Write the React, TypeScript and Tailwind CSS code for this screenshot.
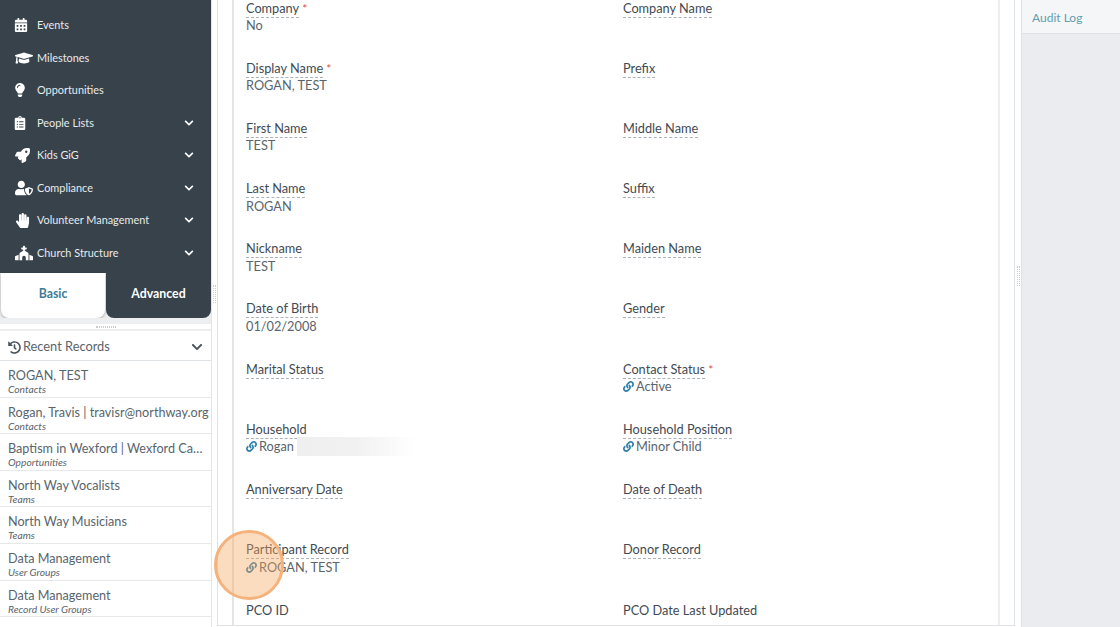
import type { ReactNode } from "react";
import {
  FaCalendarAlt,
  FaChevronDown,
  FaChurch,
  FaClipboardList,
  FaGraduationCap,
  FaHandPaper,
  FaHistory,
  FaLightbulb,
  FaLink,
  FaRocket,
  FaUserShield,
} from "react-icons/fa";

const navItems = [
  { label: "Events", icon: <FaCalendarAlt size={14} className="-ml-[1px]" /> },
  { label: "Milestones", icon: <FaGraduationCap size={18} /> },
  { label: "Opportunities", icon: <FaLightbulb size={14} className="-ml-[2px]" /> },
  { label: "People Lists", icon: <FaClipboardList size={14} className="-ml-[2px]" />, more: true },
  { label: "Kids GiG", icon: <FaRocket size={15} />, more: true },
  { label: "Compliance", icon: <FaUserShield size={18} />, more: true },
  { label: "Volunteer Management", icon: <FaHandPaper size={15} />, more: true },
  { label: "Church Structure", icon: <FaChurch size={18} />, more: true },
];

const recents = [
  ["ROGAN, TEST", "Contacts"],
  ["Rogan, Travis | travisr@northway.org", "Contacts"],
  ["Baptism in Wexford | Wexford Campus", "Opportunities"],
  ["North Way Vocalists", "Teams"],
  ["North Way Musicians", "Teams"],
  ["Data Management", "User Groups"],
  ["Data Management", "Record User Groups"],
];

type FieldProps = {
  label: string;
  value?: ReactNode;
  required?: boolean;
  linked?: boolean;
  plain?: boolean;
};

const fields: FieldProps[] = [
  { label: "Company", value: "No", required: true },
  { label: "Company Name" },
  { label: "Display Name", value: "ROGAN, TEST", required: true },
  { label: "Prefix" },
  { label: "First Name", value: "TEST" },
  { label: "Middle Name" },
  { label: "Last Name", value: "ROGAN" },
  { label: "Suffix" },
  { label: "Nickname", value: "TEST" },
  { label: "Maiden Name" },
  { label: "Date of Birth", value: "01/02/2008" },
  { label: "Gender" },
  { label: "Marital Status" },
  { label: "Contact Status", value: "Active", required: true, linked: true },
  {
    label: "Household",
    linked: true,
    value: (
      <span className="flex items-center">
        Rogan
        <span className="ml-[3px] h-[19px] w-[118px] bg-gradient-to-r from-[#efefef] via-[#f1f1f1] to-white" />
      </span>
    ),
  },
  { label: "Household Position", value: "Minor Child", linked: true },
  { label: "Anniversary Date" },
  { label: "Date of Death" },
  { label: "Participant Record", value: "ROGAN, TEST", linked: true },
  { label: "Donor Record" },
  { label: "PCO ID", plain: true },
  { label: "PCO Date Last Updated", plain: true },
];

function Field({ label, value, required, linked, plain }: FieldProps) {
  return (
    <div className="h-[60.2px]">
      <div className="flex h-[17px] items-center text-[12.75px] leading-[17px] text-[#3f4a52]">
        <span className={plain ? "" : "border-b border-dashed border-[#aab2b8]"}>{label}</span>
        {required && <span className="ml-[3px] self-start text-[12px] text-[#d9534f]">*</span>}
      </div>
      {value && (
        <div className="flex h-[17px] items-center text-[12.75px] text-[#59646c]">
          {linked && <FaLink size={11} className="mr-[2px] text-[#2f7ea8]" />}
          {value}
        </div>
      )}
    </div>
  );
}

function Sidebar() {
  return (
    <aside className="flex w-[212px] shrink-0 flex-col border-r border-[#e3e5e8]">
      <nav className="h-[273px] bg-[#37424b] pt-[9px] text-[#e8eaec]">
        {navItems.map((item) => (
          <div key={item.label} className="flex h-[32.5px] items-center text-[10.9px]">
            <span className="flex w-[37px] shrink-0 justify-start pl-[15px] text-white">{item.icon}</span>
            <span className="flex-1">{item.label}</span>
            {item.more && <FaChevronDown size={10} className="mr-[17px] text-white" />}
          </div>
        ))}
      </nav>
      <div className="flex h-[45px] bg-[#eceef0] text-[12.3px] font-bold">
        <div className="ml-px flex w-[104px] items-center justify-center rounded-b-lg bg-white pb-[3px] text-[#3f7c96] shadow-[0_1px_3px_rgba(0,0,0,0.3)]">
          Basic
        </div>
        <div className="ml-px flex flex-1 items-center justify-center rounded-b-lg bg-[#37424b] pb-[3px] text-white">
          Advanced
        </div>
      </div>
      <div className="h-[6px] bg-[#eceef0]" />
      <div className="flex h-[7px] items-center justify-center border-b-2 border-[#eceef0]">
        <span className="h-[2px] w-[20px] border-y border-dotted border-[#c9cdd1]" />
      </div>
      <div className="flex h-[30px] items-center border-b border-[#dfe2e5] pt-[3px] pr-[8px] pl-2 text-[12.8px] text-[#59646c]">
        <FaHistory size={13} className="mr-[2px] text-[#4b555c]" />
        <span className="flex-1">Recent Records</span>
        <FaChevronDown size={12} className="text-[#4b555c]" />
      </div>
      {recents.map(([name, type], i) => (
        <div key={i} className="h-[36.6px] border-b border-[#e6e8ea] pt-[6px] pr-px pl-2">
          <div className="truncate text-[12.65px] leading-[17px] text-[#59646c]">{name}</div>
          <div className="text-[10.25px] leading-[11px] text-[#59646c] italic">{type}</div>
        </div>
      ))}
    </aside>
  );
}

export default function App() {
  return (
    <div className="relative flex h-[627px] w-[1120px] overflow-hidden bg-white font-['Lato','Carlito','Liberation_Sans',sans-serif]">
      <Sidebar />

      <div className="flex w-[5px] shrink-0 items-center justify-center pb-[39px]">
        <span className="h-[18px] w-[3px] border-x border-dotted border-[#c9cdd1]" />
      </div>

      <main className="h-[626px] w-[798px] shrink-0 border-r border-b border-l border-[#dfe2e5] px-[14px]">
        <div className="h-full border-x-2 border-[#eceef0] border-l-[#e3e5e8] pl-[12px]">
          <div className="grid grid-cols-[377px_1fr]">
            {fields.map((f) => (
              <Field key={f.label} {...f} />
            ))}
          </div>
        </div>
      </main>

      <div className="flex w-[6px] shrink-0 items-center justify-center pb-[75px]">
        <span className="h-[20px] w-[3px] border-x border-dotted border-[#c9cdd1]" />
      </div>

      <section className="flex-1 border-l border-[#dfe2e5] bg-[#eaecf0]">
        <div className="flex h-[34px] items-center border-b border-[#dfe2e5] bg-[#f4f6f8] pt-[3px] pl-[10px] text-[12px] text-[#5f9fae]">
          Audit Log
        </div>
      </section>

      <div className="absolute top-[530px] left-[214px] h-[70px] w-[70px] rounded-full border-[3px] border-[#f4b27c] bg-[#f8a75c]/40" />
    </div>
  );
}
